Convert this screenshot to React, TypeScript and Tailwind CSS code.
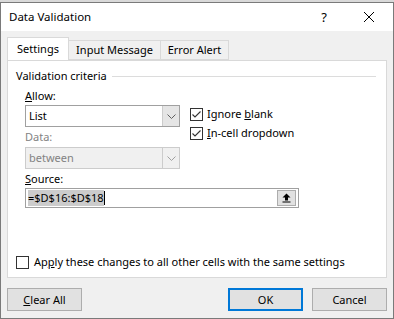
import React from "react";

const font = { fontFamily: '"Segoe UI", "Noto Sans", "Open Sans", sans-serif' };

function Check({ checked }: { checked: boolean }) {
  return (
    <span className="flex h-[13px] w-[13px] shrink-0 items-center justify-center border border-[#333333] bg-white">
      {checked && (
        <svg width="11" height="11" viewBox="0 0 11 11">
          <path d="M1.5 5.5 L4 8 L9.5 2.5" fill="none" stroke="#333333" strokeWidth="1.1" />
        </svg>
      )}
    </span>
  );
}

function Chevron({ color }: { color: string }) {
  return (
    <svg width="9" height="5" viewBox="0 0 9 5">
      <path d="M0.5 0.5 L4.5 4.5 L8.5 0.5" fill="none" stroke={color} strokeWidth="1" />
    </svg>
  );
}

function Select({ value, disabled }: { value: string; disabled?: boolean }) {
  return (
    <div
      className={`flex h-[22px] w-[155px] border ${
        disabled ? "border-[#cccccc] bg-[#f0f0f0] text-[#838383]" : "border-[#a0a0a0] bg-white"
      }`}
    >
      <span className="flex flex-1 items-center pl-[3px]">{value}</span>
      <span
        className={`flex w-[17px] items-center justify-center border-l ${
          disabled ? "border-[#cccccc] bg-[#f0f0f0]" : "border-[#cccccc] bg-[#e5e5e5]"
        }`}
      >
        <Chevron color={disabled ? "#a0a0a0" : "#606060"} />
      </span>
    </div>
  );
}

function Btn({ label, primary }: { label: React.ReactNode; primary?: boolean }) {
  return (
    <div
      className={`flex h-[23px] w-[75px] items-center justify-center bg-[#e1e1e1] ${
        primary ? "border-2 border-[#0078d7]" : "border border-[#adadad]"
      }`}
    >
      {label}
    </div>
  );
}

export default function App() {
  return (
    <div className="h-[319px] w-[394px] bg-[#d9d9d9] pt-[2px] text-[11px] leading-[16px] text-black" style={font}>
      <div className="flex h-[317px] flex-col border border-[#7a7a7a] bg-[#f0f0f0]">
        {/* title bar */}
        <div className="flex h-[28px] items-center bg-white pl-[8px]">
          <span className="flex-1 text-[11.5px]">Data Validation</span>
          <span className="mr-[36px] text-[13px]">?</span>
          <svg width="12" height="12" viewBox="0 0 12 12" className="mr-[18px]">
            <path d="M1 1 L11 11 M11 1 L1 11" stroke="#000" strokeWidth="1" />
          </svg>
        </div>

        <div className="flex flex-1 flex-col px-[6px] pt-[7px]">
          {/* tabs */}
          <div className="relative z-10 flex h-[22px] items-end">
            <div className="flex h-[23px] w-[62px] items-start justify-center border border-b-0 border-[#d9d9d9] bg-white pt-[3px]">
              Settings
            </div>
            <div className="flex h-[20px] w-[92px] items-start justify-center border border-l-0 border-[#d9d9d9] bg-[#f0f0f0] pt-[1px]">
              Input Message
            </div>
            <div className="flex h-[20px] w-[68px] items-start justify-center border border-l-0 border-[#d9d9d9] bg-[#f0f0f0] pt-[1px]">
              Error Alert
            </div>
          </div>

          {/* panel */}
          <div className="flex h-[218px] flex-col border border-[#d9d9d9] bg-white px-[8px] pt-[7px]">
            <div className="flex items-center">
              <span>Validation criteria</span>
              <span className="ml-[5px] mr-[2px] h-px flex-1 bg-[#dcdcdc]" />
            </div>

            <div className="ml-[9px] mt-[4px]">
              <u>A</u>llow:
            </div>
            <div className="ml-[9px] mt-[1px] flex">
              <div className="flex flex-col">
                <Select value="List" />
                <div className="mt-[2px] text-[#838383]">Data:</div>
                <div className="mt-[2px]">
                  <Select value="between" disabled />
                </div>
              </div>
              <div className="ml-[10px] mt-[1px] flex flex-col gap-[3px]">
                <label className="flex items-center gap-[4px]">
                  <Check checked />
                  <span>
                    Ignore <u>b</u>lank
                  </span>
                </label>
                <label className="flex items-center gap-[4px]">
                  <Check checked />
                  <span>
                    <u>I</u>n-cell dropdown
                  </span>
                </label>
              </div>
            </div>

            <div className="ml-[9px] mt-[2px]">
              <u>S</u>ource:
            </div>
            <div className="ml-[9px] mt-[1px] flex h-[20px] w-[274px] items-center border border-[#a0a0a0] bg-white pl-[2px] pr-[2px]">
              <span className="flex flex-1 items-center">
                <span className="bg-[#cccccc]">=$D$16:$D$18</span>
                <span className="h-[14px] w-px bg-black" />
              </span>
              <span className="flex h-[16px] w-[19px] items-center justify-center border border-[#adadad] bg-[#e1e1e1]">
                <svg width="9" height="10" viewBox="0 0 9 10">
                  <path d="M4.5 0.5 L8.5 4.5 L6 4.5 L6 7.5 L3 7.5 L3 4.5 L0.5 4.5 Z" fill="#000" />
                  <rect x="0.5" y="8.5" width="8" height="1" fill="#000" />
                </svg>
              </span>
            </div>

            <label className="mb-[7px] mt-auto flex items-center gap-[5px]">
              <Check checked={false} />
              <span>
                Ap<u>p</u>ly these changes to all other cells with the same settings
              </span>
            </label>
          </div>

          {/* buttons */}
          <div className="mt-[10px] flex">
            <Btn
              label={
                <span>
                  <u>C</u>lear All
                </span>
              }
            />
            <span className="flex-1" />
            <Btn label="OK" primary />
            <span className="w-[9px]" />
            <Btn label="Cancel" />
          </div>
        </div>
      </div>
    </div>
  );
}
